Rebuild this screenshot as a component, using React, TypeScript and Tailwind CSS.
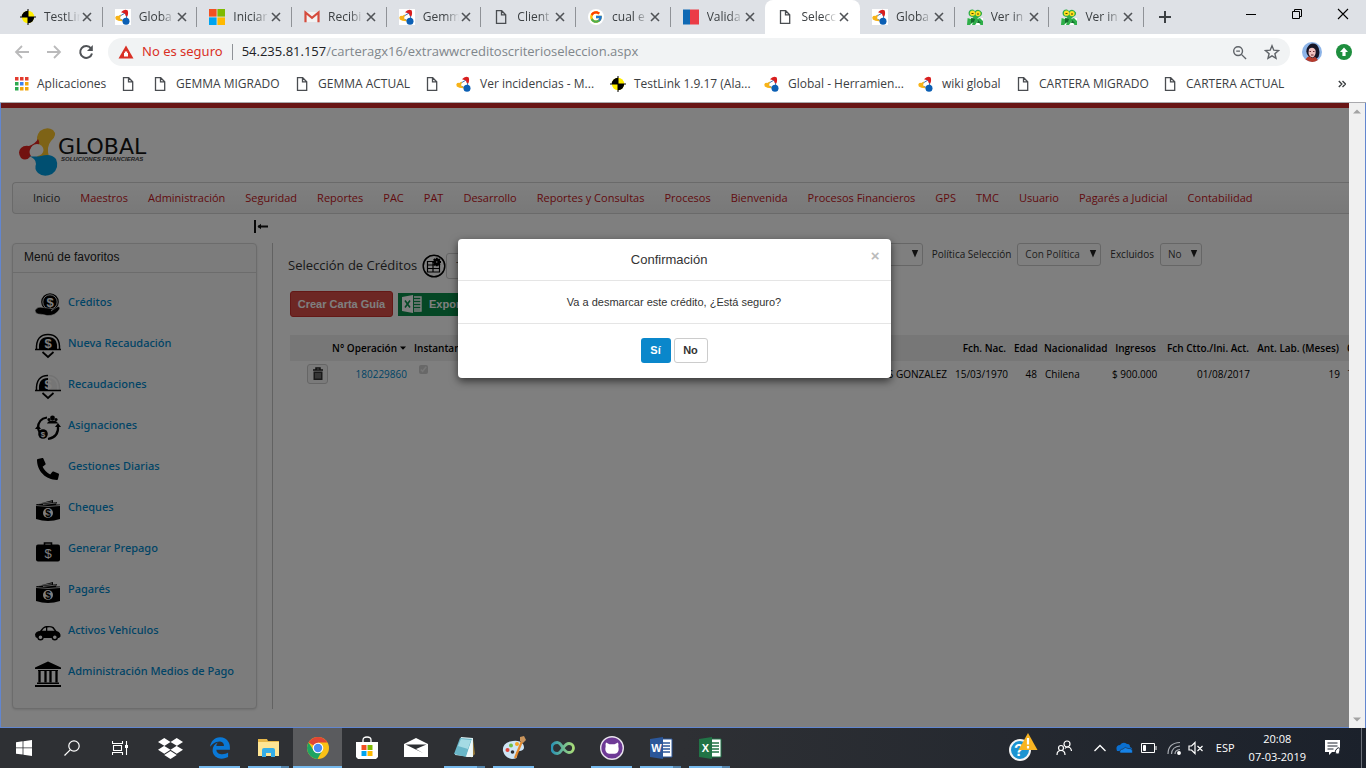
import React from "react";
import { FaDropbox, FaEdgeLegacy, FaPhoneAlt } from "react-icons/fa";
import { FcGoogle } from "react-icons/fc";

const TestLinkIcon = () => (
  <svg viewBox="0 0 16 16" className="size-4 shrink-0">
    <circle cx="8" cy="8" r="6.2" fill="#ffee00" />
    <path d="M8 8V1.8A6.2 6.2 0 0 0 1.8 8zM8 8v6.2A6.2 6.2 0 0 0 14.200 8z" fill="#000" />
    <path d="M8 0v16M0 8h16" stroke="#000" strokeWidth="1" />
  </svg>
);

const GlobalIcon = () => (
  <svg viewBox="0 0 16 16" className="size-4 shrink-0 bg-white">
    <path d="M2.500 8.500L11 3.500M11 3.500L12 12M2.500 9l8 3.500" stroke="#3b74b8" strokeWidth="1" />
    <path d="M6 3.200Q9 -.5 12.500 1.200Q13.800 4 12.300 7.500L10.500 6.500L10 4.500z" fill="#d81e1e" />
    <path d="M.3 8.500Q1 6 3.200 7L6 5.500L5 9.500L8.500 12.200Q3 12.500 .8 10.500z" fill="#f7b318" />
    <circle cx="11" cy="12.300" r="3.500" fill="#0b5fb4" />
  </svg>
);

const MicrosoftIcon = () => (
  <svg viewBox="0 0 16 16" className="size-4 shrink-0">
    <path fill="#f25022" d="M0 0h7.600v7.600H0z" />
    <path fill="#7fba00" d="M8.400 0H16v7.600H8.400z" />
    <path fill="#00a4ef" d="M0 8.400h7.600V16H0z" />
    <path fill="#ffb900" d="M8.400 8.400H16V16H8.400z" />
  </svg>
);

const GmailIcon = () => (
  <svg viewBox="0 0 16 16" className="size-4 shrink-0">
    <path fill="#f2f2f2" d="M2 3h12v10H2z" />
    <path d="M1.500 13.200V3.500L8 8.800l6.500-5.300v9.700" fill="none" stroke="#d54b3d" strokeWidth="2.200" />
  </svg>
);

const PageIcon = () => (
  <svg viewBox="0 0 16 16" className="size-4 shrink-0" fill="none" stroke="#4a4d51" strokeWidth="1.300">
    <path d="M3.500 1.700h5.200l4 4v8.600H3.500zM8.500 1.700v4.200h4.200" />
  </svg>
);

const GoogleTabIcon = () => (
  <span className="flex size-4 shrink-0 items-center justify-center rounded-full bg-white">
    <FcGoogle className="size-[14px]" />
  </span>
);

const ChileIcon = () => (
  <svg viewBox="0 0 16 16" className="size-4 shrink-0">
    <path fill="#0f69b4" d="M0 .5h7v15H0z" />
    <path fill="#eb3c46" d="M7 .5h9v15H7z" />
  </svg>
);

const MantisIcon = () => (
  <svg viewBox="0 0 16 16" className="size-4 shrink-0">
    <path fill="#fff" d="M0 9h16v7H0z" />
    <path fill="#2fae4a" d="M1.500 4Q2 0 6 .5L8 2Q12-1 15 3.500Q15.500 7 12 8L10 10l3-1 3 3v4h-2.500l-2.500-4-3 4H5l1-3-3 3H0l.5-7 4 1 2-2Q1.500 8 1.500 4z" />
    <path fill="#136d2c" d="M4 9l4 1-1 3-3 1zM11 11l3 3h-4z" />
    <circle cx="5.500" cy="4.200" r="2.600" fill="#ffdf20" />
    <circle cx="11" cy="4.600" r="2.600" fill="#ffdf20" />
    <path d="M4.500 4.500h2M10 5h2" stroke="#4d4100" strokeWidth="1.200" />
  </svg>
);

const CloseIcon = () => (
  <svg viewBox="0 0 10 10" className="size-[10px]" stroke="#505357" strokeWidth="1.600">
    <path d="M1 1l8 8M9 1L1 9" />
  </svg>
);

type Tab = { icon: React.ReactNode; label: string; active?: boolean; noRule?: boolean };

const tabs: Tab[] = [
  { icon: <TestLinkIcon />, label: "TestLin" },
  { icon: <GlobalIcon />, label: "Globa" },
  { icon: <MicrosoftIcon />, label: "Iniciar" },
  { icon: <GmailIcon />, label: "Recibi" },
  { icon: <GlobalIcon />, label: "Gemm" },
  { icon: <PageIcon />, label: "Client" },
  { icon: <GoogleTabIcon />, label: "cual e" },
  { icon: <ChileIcon />, label: "Valida", noRule: true },
  { icon: <PageIcon />, label: "Selecc", active: true, noRule: true },
  { icon: <GlobalIcon />, label: "Globa" },
  { icon: <MantisIcon />, label: "Ver in" },
  { icon: <MantisIcon />, label: "Ver in" },
];

function TabStrip() {
  return (
    <div className="flex h-[34px] shrink-0 bg-[#dee1e6] pl-2">
      <div className="flex w-[1136px] min-w-0">
        {tabs.map((tab, i) => (
          <div
            key={i}
            className={
              tab.active
                ? "relative flex min-w-0 flex-1 items-center rounded-t-lg bg-white pl-3"
                : "relative flex min-w-0 flex-1 items-center pl-3"
            }
          >
            {tab.icon}
            <span className="ml-2 w-9 overflow-hidden text-[12px] whitespace-nowrap text-[#3c4043] [mask-image:linear-gradient(to_right,black_60%,transparent)]">
              {tab.label}
            </span>
            <button type="button" aria-label="Cerrar pestaña" className="ml-[2px]">
              <CloseIcon />
            </button>
            {!tab.noRule && <span className="absolute top-[7px] right-0 h-5 w-px bg-[#8f9297]" />}
          </div>
        ))}
      </div>
      <button type="button" aria-label="Nueva pestaña" className="ml-[14px] self-center">
        <svg viewBox="0 0 14 14" className="size-[14px]" stroke="#3c4043" strokeWidth="2">
          <path d="M7 1v12M1 7h12" />
        </svg>
      </button>
      <div className="ml-auto flex items-start pt-2 pr-[17px]">
        <button type="button" aria-label="Minimizar" className="mr-[34px]">
          <svg viewBox="0 0 12 12" className="size-3" stroke="#000">
            <path d="M1 6.500h10" />
          </svg>
        </button>
        <button type="button" aria-label="Restaurar" className="mr-[34px]">
          <svg viewBox="0 0 12 12" className="size-3" stroke="#000" fill="none">
            <path d="M1.500 3.500h7v7h-7zM3.500 3V1.500h7v7H9" />
          </svg>
        </button>
        <button type="button" aria-label="Cerrar">
          <svg viewBox="0 0 12 12" className="size-3" stroke="#000" strokeWidth="1.100">
            <path d="M1 1l10 10M11 1L1 11" />
          </svg>
        </button>
      </div>
    </div>
  );
}

function AddressBar() {
  return (
    <div className="flex h-9 shrink-0 items-center bg-white pr-[14px] pl-[14px]">
      <button type="button" aria-label="Atrás">
        <svg viewBox="0 0 16 16" className="size-4" fill="none" stroke="#bababb" strokeWidth="1.800">
          <path d="M15 8H2.500M8 2L2 8l6 6" />
        </svg>
      </button>
      <button type="button" aria-label="Adelante" className="ml-4">
        <svg viewBox="0 0 16 16" className="size-4" fill="none" stroke="#bababb" strokeWidth="1.800">
          <path d="M1 8h12.500M8 2l6 6-6 6" />
        </svg>
      </button>
      <button type="button" aria-label="Recargar" className="ml-4">
        <svg viewBox="0 0 16 16" className="size-4">
          <path d="M13 4.300A6 6 0 1 0 14 9.500" fill="none" stroke="#505357" strokeWidth="2" />
          <path d="M14.800 1v6H9z" fill="#505357" />
        </svg>
      </button>
      <div className="ml-[14px] flex h-7 flex-1 items-center rounded-full bg-[#f1f3f4] pr-[10px] pl-[10px]">
        <svg viewBox="0 0 16 14" className="h-[14px] w-4">
          <path d="M8 .5L15.500 13.500H.5z" fill="#d93025" />
          <path d="M6 8h4v3.500H6zM6.800 8V6.500h2.400V8" fill="#fff" />
        </svg>
        <span className="ml-2 font-[Noto_Sans] text-[13px] text-[#d93025]">No es seguro</span>
        <span className="mr-[9px] ml-[9px] h-4 w-px bg-[#8f9297]" />
        <div role="textbox" aria-label="Dirección" className="text-[13px] text-[#80868b]">
          <span className="text-[#202124]">54.235.81.157</span>/carteragx16/extrawwcreditoscriterioseleccion.aspx
        </div>
        <button type="button" aria-label="Zoom" className="ml-auto">
          <svg viewBox="0 0 16 16" className="size-[15px]" fill="none" stroke="#5f6368" strokeWidth="1.500">
            <circle cx="6.500" cy="6.500" r="4.700" />
            <path d="M10 10l5 5M4.500 6.500h4" />
          </svg>
        </button>
        <button type="button" aria-label="Marcador" className="ml-[17px]">
          <svg viewBox="0 0 16 16" className="size-4" fill="none" stroke="#5f6368" strokeWidth="1.400">
            <path d="M8 1.800l1.800 4.400 4.700.4-3.600 3.100 1.100 4.600L8 11.800l-4 2.500 1.100-4.600L1.500 6.600l4.700-.4z" />
          </svg>
        </button>
      </div>
      <svg viewBox="0 0 20 20" className="ml-3 size-5">
        <circle cx="10" cy="10" r="10" fill="#8db4e8" />
        <path d="M5 6Q9-1 15 3Q19 8 16.500 15L13 18L7 15Q3 11 5 6z" fill="#161526" />
        <path d="M7 7Q11 4 13.500 8Q14.500 13 11 15.500Q7 15 6.500 11z" fill="#f0c0bd" />
        <path d="M3.500 17.500Q6 13.500 8.500 15Q11 17 13 14.800L16 18Q10 22 3.500 17.500z" fill="#b53a2b" />
        <path d="M7.500 9.500h1.500M11 9.500h1.500M9 13h2.500" stroke="#6b2c35" />
      </svg>
      <svg viewBox="0 0 16 16" className="ml-[14px] size-4">
        <circle cx="8" cy="8" r="8" fill="#1e8e3e" />
        <path d="M8 3.500L12 8H9.600v4H6.400V8H4z" fill="#fff" />
      </svg>
    </div>
  );
}

const AppsIcon = () => (
  <svg viewBox="0 0 14 14" className="size-[14px] shrink-0">
    <path fill="#e33b2e" d="M0 0h3.500v3.500H0zM5 0h3.500v3.500H5zM10 0h3.500v3.500H10z" />
    <path fill="#2da94f" d="M0 5h3.500v3.500H0zM0 10h3.500v3.500H0z" />
    <path fill="#3c82f0" d="M5 5h3.500v3.500H5z" />
    <path fill="#f2a60c" d="M10 5h3.500v3.500H10zM5 10h3.500v3.500H5zM10 10h3.500v3.500H10z" />
  </svg>
);

const bookmarks: { icon: React.ReactNode; label: string; width: string }[] = [
  { icon: <AppsIcon />, label: "Aplicaciones", width: "w-[105px]" },
  { icon: <PageIcon />, label: "", width: "w-8" },
  { icon: <PageIcon />, label: "GEMMA MIGRADO", width: "w-[142px]" },
  { icon: <PageIcon />, label: "GEMMA ACTUAL", width: "w-[130px]" },
  { icon: <PageIcon />, label: "", width: "w-8" },
  { icon: <GlobalIcon />, label: "Ver incidencias - M...", width: "w-[154px]" },
  { icon: <TestLinkIcon />, label: "TestLink 1.9.17 (Ala...", width: "w-[154px]" },
  { icon: <GlobalIcon />, label: "Global - Herramien...", width: "w-[154px]" },
  { icon: <GlobalIcon />, label: "wiki global", width: "w-[97px]" },
  { icon: <PageIcon />, label: "CARTERA MIGRADO", width: "w-[147px]" },
  { icon: <PageIcon />, label: "CARTERA ACTUAL", width: "w-[130px]" },
];

function BookmarksBar() {
  return (
    <nav className="flex h-[33px] shrink-0 items-center border-b border-[#a9a9ad] bg-white pb-1 pl-[15px] text-[12px] text-[#3c4043]">
      {bookmarks.map((b, i) => (
        <a key={i} href="#" aria-label={b.label || "Página"} className={`${b.width} flex shrink-0 items-center gap-2 whitespace-nowrap`}>
          {b.icon}
          {b.label}
        </a>
      ))}
      <button type="button" aria-label="Más marcadores" className="mr-5 ml-auto">
        <svg viewBox="0 0 8 8" className="size-2" fill="none" stroke="#3c4043" strokeWidth="1.400">
          <path d="M.8 1l3 3-3 3M4.500 1l3 3-3 3" />
        </svg>
      </button>
    </nav>
  );
}

function GlobalLogo() {
  return (
    <svg viewBox="0 0 136 54" className="h-[54px] w-[136px]">
      <path d="M22 5Q29 0 35 4Q40 9 33 15Q28 21 31 31L18 32Q27 22 20 18Q17 11 22 5z" fill="#fcc62d" />
      <path d="M20 13Q24 20 16 20Q9 24 13 30Q8 36 3 32Q-1 26 3 22Q6 19 11 20Q17 18 20 13z" fill="#e52421" />
      <path d="M10 30Q17 31 23 30Q33 27 38 33Q42 42 34 48Q26 52 20 47Q16 43 18 38Q18 32 10 30z" fill="#009fe3" />
      <ellipse cx="19" cy="24" rx="6.500" ry="6" fill="#fff" />
      <text x="40" y="28" fontFamily="DejaVu Sans" fontSize="22" fill="#151515">
        GLOBAL
      </text>
      <text x="43" y="35" fontFamily="Liberation Sans" fontSize="6" fontWeight="bold" fontStyle="italic" fill="#444">
        SOLUCIONES FINANCIERAS
      </text>
    </svg>
  );
}

const menu = [
  "Inicio", "Maestros", "Administración", "Seguridad", "Reportes", "PAC", "PAT", "Desarrollo",
  "Reportes y Consultas", "Procesos", "Bienvenida", "Procesos Financieros", "GPS", "TMC", "Usuario",
  "Pagarés a Judicial", "Contabilidad",
];

const Dollar = ({ x, y, size, color = "#fff" }: { x: number; y: number; size: number; color?: string }) => (
  <text x={x} y={y} fontSize={size} fontFamily="Liberation Sans" fontWeight="bold" textAnchor="middle" fill={color}>
    $
  </text>
);

const HandCoin = () => (
  <svg viewBox="0 0 26 26" className="size-[26px]">
    <circle cx="15" cy="10" r="8.800" fill="#000" />
    <circle cx="15" cy="10" r="7.200" fill="none" stroke="#fff" strokeWidth=".8" />
    <Dollar x={15} y={14.500} size={13} />
    <path d="M0 18Q3 14 8 15.500L17 16.500Q18 18 16 19L23 14.500Q26 15 24 18Q20 24 12 23.500Q6 22 3 22Q0 21 0 18z" fill="#000" stroke="#fff" strokeWidth=".5" />
  </svg>
);

const CoinDown = ({ half = false }: { half?: boolean }) => (
  <svg viewBox="0 0 26 26" className="size-[26px]">
    <path d="M1.500 16Q1 1.500 13 1.500" fill="none" stroke="#000" strokeWidth="1.500" />
    <path d="M13 1.500Q25 1.500 24.500 16" fill="none" stroke={half ? "#e4e4e4" : "#000"} strokeWidth="1.500" />
    <path d="M4 16Q3 4 13 4V16z" fill="#000" />
    <path d="M13 4Q23 4 22 16H13z" fill={half ? "#ececec" : "#000"} />
    <Dollar x={13} y={14.500} size={13} />
    <path d="M0 16.500h26M7.500 19l5.500 5 5.500-5" fill="none" stroke="#000" strokeWidth="1.700" />
  </svg>
);

const Cycle = () => (
  <svg viewBox="0 0 26 26" className="size-[26px]">
    <path d="M3 13Q3 4 12 2.500M23 11Q24 22 13 24M5 18Q3 15 3 12" fill="none" stroke="#000" strokeWidth="2.200" />
    <path d="M0 14l3-4 3 4zM20 12l3-4 3 4z" fill="#000" />
    <circle cx="8" cy="19" r="4.800" fill="#000" />
    <Dollar x={8} y={22} size={8} />
    <circle cx="17.500" cy="3" r="2.400" fill="#000" />
    <circle cx="14" cy="4.500" r="1.600" fill="#000" />
    <circle cx="21" cy="4.500" r="1.600" fill="#000" />
    <path d="M12 8.500Q13 5.500 17.500 5.500Q22 5.500 23 8.500z" fill="#000" />
  </svg>
);

const Bills = () => (
  <svg viewBox="0 0 26 26" className="size-[26px]">
    <path d="M1 7.500L18 3v2.500l4-.5-1 2.500h4V22Q13 26 1 22z" fill="#000" />
    <path d="M3 6.800l14-2M8 7.500l13-1.500M1 8.500Q13 10.500 25 8.500" fill="none" stroke="#fff" strokeWidth=".7" />
    <circle cx="13" cy="16" r="5" fill="#fff" />
    <Dollar x={13} y={19.500} size={10} color="#000" />
  </svg>
);

const Briefcase = () => (
  <svg viewBox="0 0 26 26" className="size-[26px]">
    <rect x="1" y="6.500" width="24" height="17" rx="2" fill="#000" />
    <path d="M9.500 7V5h7v2" fill="none" stroke="#000" strokeWidth="1.600" />
    <text x="13" y="20" fontSize="13" fontFamily="Liberation Sans" textAnchor="middle" fill="#fff">$</text>
  </svg>
);

const SideCar = () => (
  <svg viewBox="0 0 26 26" className="size-[26px]">
    <path d="M0 14.500Q1 11 5 11Q8 6.500 11 6Q16 5.500 18.500 7L21.500 11Q26 12 25.500 16.500L24 18H2Q0 17.500 0 14.500z" fill="#000" />
    <path d="M7 10.700Q8.500 8 11 7.600V10.700zM12.300 7.500Q16 7 17.500 8.200L19.500 10.700H12.300z" fill="#fff" />
    <circle cx="5.500" cy="17.300" r="2.500" fill="#fff" stroke="#000" strokeWidth="1.400" />
    <circle cx="19.800" cy="17.300" r="2.500" fill="#fff" stroke="#000" strokeWidth="1.400" />
  </svg>
);

const Bank = () => (
  <svg viewBox="0 0 26 26" className="size-[26px]">
    <path d="M0 6.500L13 .5l13 6V8H0zM2 21.500h22V23H2zM0 24h26v2H0z" fill="#000" />
    <path d="M4.500 9v12.500M10.500 9v12.500M15.500 9v12.500M21.500 9v12.500" stroke="#000" strokeWidth="2.300" />
    <path d="M3 9.500h20" stroke="#000" />
  </svg>
);

const Phone = () => (
  <span className="flex size-[26px] items-center justify-center">
    <FaPhoneAlt className="size-[22px] -scale-y-100 -rotate-90 text-black" />
  </span>
);

const favorites: { icon: React.ReactNode; label: string }[] = [
  { icon: <HandCoin />, label: "Créditos" },
  { icon: <CoinDown />, label: "Nueva Recaudación" },
  { icon: <CoinDown half />, label: "Recaudaciones" },
  { icon: <Cycle />, label: "Asignaciones" },
  { icon: <Phone />, label: "Gestiones Diarias" },
  { icon: <Bills />, label: "Cheques" },
  { icon: <Briefcase />, label: "Generar Prepago" },
  { icon: <Bills />, label: "Pagarés" },
  { icon: <SideCar />, label: "Activos Vehículos" },
  { icon: <Bank />, label: "Administración Medios de Pago" },
];

function Sidebar() {
  return (
    <aside className="flex w-[245px] shrink-0 flex-col rounded border border-[#d8d8d8] bg-[#f9f9f9] shadow-sm">
      <h2 className="border-b border-[#d8d8d8] px-[11px] pt-1 pb-[6px] font-[Liberation_Sans] text-[12px] leading-[18px] text-[#222]">
        Menú de favoritos
      </h2>
      <ul className="pt-4 pl-[22px]">
        {favorites.map((f) => (
          <li key={f.label} className="h-[41px]">
            <a href="#" className="flex gap-[7px] font-['Noto_Sans'] text-[11px] leading-[26px] font-medium whitespace-nowrap text-[#0088cc]">
              <span className="pt-[3px]">{f.icon}</span>
              {f.label}
            </a>
          </li>
        ))}
      </ul>
    </aside>
  );
}

const selectClass = "appearance-none rounded-[3px] border border-[#ccc] bg-transparent text-[10px] text-[#444]";

function Filter({ id, label, value, width }: { id: string; label: string; value: string; width: string }) {
  return (
    <>
      <label htmlFor={id} className="mr-[6px] ml-[9px] text-[10px] whitespace-nowrap">
        {label}
      </label>
      <span className={`${width} relative flex`}>
        <select id={id} className={`${selectClass} h-[23px] w-full pl-[7px]`}>
          <option>{value}</option>
        </select>
        <svg viewBox="0 0 8 8" className="absolute top-[7px] right-1 size-2">
          <path d="M.8 0h6.400L4 7.500z" fill="#222" />
        </svg>
      </span>
    </>
  );
}

const GridGearIcon = () => (
  <svg viewBox="0 0 24 24" className="size-6">
    <circle cx="12" cy="12" r="10.800" fill="none" stroke="#000" strokeWidth="1.500" />
    <path d="M5.500 7.500h12v10.500h-12zM5.500 11h12M5.500 14.500h12M11 7.500V18" fill="none" stroke="#000" strokeWidth="1.200" />
    <path d="M14.800 3.800v8.400M10.600 8h8.400M11.800 5l6 6M17.800 5l-6 6" stroke="#000" strokeWidth="2" />
    <circle cx="14.800" cy="8" r="2" fill="#fff" stroke="#000" strokeWidth="2.600" />
  </svg>
);

const ExcelButtonIcon = () => (
  <svg viewBox="0 0 20 18" className="h-[18px] w-5">
    <path d="M0 2L11 0v18L0 16z" fill="#fff" />
    <path d="M12 2h7v14h-7M12 5h7M12 8h7M12 11h7M12 14h7" fill="none" stroke="#fff" strokeWidth="1.400" />
    <path d="M3 5.500l5 7M8 5.500l-5 7" stroke="#0a8f4a" strokeWidth="1.600" />
  </svg>
);

function CreditsTable() {
  return (
    <table className="mt-[18px] w-[1130px] table-fixed border-collapse text-[10px] whitespace-nowrap text-black">
      <colgroup>
        <col className="w-[42px]" />
        <col className="w-[79px]" />
        <col className="w-[69px]" />
        <col />
        <col className="w-[60px]" />
        <col className="w-[30px]" />
        <col className="w-[67px]" />
        <col className="w-[53px]" />
        <col className="w-[93px]" />
        <col className="w-[90px]" />
        <col className="w-[76px]" />
      </colgroup>
      <thead className="bg-[#eeeeee]">
        <tr className="h-[26px] text-right [&>th]:pr-[5px] [&>th]:pl-[3px] [&>th]:font-semibold">
          <th aria-label="Eliminar" />
          <th>
            <span className="flex items-center justify-end gap-[3px]">
              N° Operación
              <svg viewBox="0 0 6 4" className="h-1 w-[6px] shrink-0">
                <path d="M0 .5h6L3 3.800z" fill="#000" />
              </svg>
            </span>
          </th>
          <th className="text-left">Instantanea</th>
          <th className="text-left">Nombre</th>
          <th>Fch. Nac.</th>
          <th className="text-left">Edad</th>
          <th className="text-left">Nacionalidad</th>
          <th>Ingresos</th>
          <th>Fch Ctto./Ini. Act.</th>
          <th>Ant. Lab. (Meses)</th>
          <th className="text-left">Cargo</th>
        </tr>
      </thead>
      <tbody>
        <tr className="h-[26px] text-right [&>td]:px-1">
          <td>
            <button type="button" aria-label="Eliminar crédito" className="ml-auto flex h-5 w-[21px] items-center justify-center rounded-[3px] border border-[#ccc] bg-[#f4f4f4]">
              <svg viewBox="0 0 12 14" className="h-[14px] w-3">
                <path d="M1 3h10M4 2.500V1h4v1.500" fill="none" stroke="#222" strokeWidth="1.500" />
                <path d="M1.500 4.500h9V13h-9z" fill="#333" />
                <path d="M4 6v5.500M6 6v5.500M8 6v5.500" stroke="#fff" strokeWidth=".6" />
              </svg>
            </button>
          </td>
          <td>
            <a href="#" className="text-[#0088cc]">180229860</a>
          </td>
          <td className="text-left align-top">
            <input type="checkbox" aria-label="Instantanea" defaultChecked disabled className="mt-1 ml-1 size-[9px]" />
          </td>
          <td>TORRES GONZALEZ</td>
          <td>15/03/1970</td>
          <td>48</td>
          <td className="text-left">Chilena</td>
          <td>$ 900.000</td>
          <td>01/08/2017</td>
          <td>19</td>
          <td className="text-left">Técnico</td>
        </tr>
      </tbody>
    </table>
  );
}

function CreditsPanel() {
  return (
    <section className="ml-[15px] min-w-0 flex-1 overflow-hidden border-l border-[#c4c4c4] pl-[15px]">
      <div className="flex items-start text-[#333]">
        <div className="flex shrink-0 items-center pt-[10px]">
          <h1 className="text-[13px] font-medium whitespace-nowrap">Selección de Créditos</h1>
          <button type="button" aria-label="Configurar columnas" className="ml-[5px]">
            <GridGearIcon />
          </button>
          <select aria-label="Criterio" className={`${selectClass} h-[26px] w-[120px] pl-[9px]`}>
            <option>Todos</option>
          </select>
        </div>
        <div className="ml-auto flex shrink-0 items-center pr-[147px]">
          <Filter id="estado" label="Estado" value="Todos" width="w-[130px]" />
          <Filter id="politica" label="Política Selección" value="Con Política" width="w-[84px]" />
          <Filter id="excluidos" label="Excluidos" value="No" width="w-[42px]" />
        </div>
      </div>
      <div className="pl-[2px]">
        <div className="mt-3 flex items-center gap-[5px] font-[Liberation_Sans] text-[11px] font-bold text-white">
          <button type="button" className="h-[26px] w-[103px] rounded-[3px] border border-[#c9302c] bg-[#da4f49]">
            Crear Carta Guía
          </button>
          <button type="button" className="flex h-[23px] w-[110px] items-center gap-[7px] bg-[#0a8f4a] pl-1">
            <ExcelButtonIcon />
            Exportar
          </button>
        </div>
        <CreditsTable />
      </div>
    </section>
  );
}

function ConfirmDialog() {
  return (
    <div
      role="dialog"
      aria-modal="true"
      aria-labelledby="confirm-title"
      className="mx-auto mt-[136px] w-[433px] rounded-[4px] bg-white text-center font-[Liberation_Sans] text-[#333] shadow-[0_3px_9px_rgba(0,0,0,0.6)]"
    >
      <div className="flex h-[42px] items-center border-b border-[#e5e5e5] pr-[11px] pl-[10px]">
        <h2 id="confirm-title" className="flex-1 text-[13px]">Confirmación</h2>
        <button type="button" aria-label="Cerrar" className="pb-2 text-[15px] leading-4 font-bold text-[#bbb]">
          ×
        </button>
      </div>
      <p className="h-[43px] border-b border-[#e5e5e5] text-[11px] leading-[42px]">
        Va a desmarcar este crédito, ¿Está seguro?
      </p>
      <div className="flex justify-center gap-[3px] pt-[14px] pb-[15px] text-[11px] font-bold">
        <button type="button" className="h-[25px] w-[30px] rounded-[3px] bg-[#0a87cb] text-white">
          Sí
        </button>
        <button type="button" className="h-[25px] w-[34px] rounded-[3px] border border-[#ccc] bg-white">
          No
        </button>
      </div>
    </div>
  );
}

function WebPage() {
  return (
    <div className="flex min-h-0 flex-1 border-x border-[#6286cf]">
      <div className="relative min-w-0 flex-1 overflow-hidden border-b border-[#6286cf]">
        <div className="flex h-full flex-col border-t-[5px] border-[#d32a2a] bg-white pb-[18px] pl-[11px]">
          <header className="pt-[18px] pl-[6px]">
            <GlobalLogo />
          </header>
          <nav className="mt-[2px] flex h-8 shrink-0 items-center gap-5 rounded-l border border-r-0 border-[#d4d4d4] bg-gradient-to-b from-white to-[#f2f2f2] pl-5 text-[11px] font-medium whitespace-nowrap">
            {menu.map((item, i) => (
              <a key={item} href="#" className={i === 0 ? "text-[#333]" : "text-[#c4161c]"}>
                {item}
              </a>
            ))}
          </nav>
          <button type="button" aria-label="Ocultar menú" className="mt-[6px] ml-[241px] h-[13px] w-[15px]">
            <svg viewBox="0 0 15 13" className="h-[13px] w-[15px]" fill="none" stroke="#111" strokeWidth="2">
              <path d="M2 0v13M5 6.500H15" />
              <path d="M8 3.800v5.400L4.500 6.500z" fill="#111" stroke="none" />
            </svg>
          </button>
          <main className="mt-[10px] flex min-h-0 flex-1">
            <Sidebar />
            <CreditsPanel />
          </main>
        </div>
        <div className="absolute inset-0 bg-black/50 pr-[2px]">
          <ConfirmDialog />
        </div>
      </div>
      <div className="flex w-4 shrink-0 flex-col items-center justify-between bg-[#f0f0f0] py-[6px]">
        <svg viewBox="0 0 8 5" className="h-[5px] w-2"><path d="M0 4.500L4 .5l4 4z" fill="#a3a3a3" /></svg>
        <svg viewBox="0 0 8 5" className="h-[5px] w-2"><path d="M0 .5h8l-4 4z" fill="#a3a3a3" /></svg>
      </div>
    </div>
  );
}

const WindowsIcon = () => (
  <svg viewBox="0 0 16 16" className="size-4" fill="#fff">
    <path d="M0 2.200L6.600 1.300v6.200H0zM7.400 1.200L16 0v7.500H7.400zM0 8.300h6.600v6.300L0 13.700zM7.400 8.300H16V16l-8.600-1.200z" />
  </svg>
);
const SearchIcon = () => (
  <svg viewBox="0 0 16 16" className="size-4" fill="none" stroke="#fff" strokeWidth="1.200">
    <circle cx="10" cy="6" r="5.200" />
    <path d="M6.200 9.800L.5 15.500" />
  </svg>
);
const TaskViewIcon = () => (
  <svg viewBox="0 0 16 16" className="size-4" fill="none" stroke="#fff" strokeWidth="1.100">
    <path d="M.5 1v2.500h10V1M.5 15v-2.500h10V15M1.500 5.500h8v5h-8zM14.500 1v14" />
    <path d="M13 5h3v3h-3z" fill="#fff" stroke="none" />
  </svg>
);
const ExplorerIcon = () => (
  <svg viewBox="0 0 24 24" className="size-6">
    <path d="M1 3h9l1 2h11v5H1z" fill="#e8b84a" />
    <path d="M1 6h21v14H1z" fill="#ffe594" />
    <path d="M5 21v-7q0-2 2-2h9q2 0 2 2v7h-4v-4H9v4z" fill="#35aee8" />
  </svg>
);
const ChromeIcon = () => (
  <svg viewBox="0 0 24 24" className="size-6">
    <circle cx="12" cy="12" r="11" fill="#fbc116" />
    <path d="M12 12L2.500 6.500A11 11 0 0 1 21.500 6.500H12z" fill="#df4535" />
    <path d="M2.500 6.500A11 11 0 0 0 11.500 23L16 15l-8 0z" fill="#1ea362" />
    <circle cx="12" cy="12" r="5.300" fill="#fff" />
    <circle cx="12" cy="12" r="4.200" fill="#4a8af4" />
  </svg>
);
const StoreIcon = () => (
  <svg viewBox="0 0 24 24" className="size-6">
    <path d="M8 6V4q0-3 4-3t4 3v2" fill="none" stroke="#fff" strokeWidth="1.300" />
    <path d="M1 6h22v15l-2 2H3l-2-2z" fill="#fff" />
    <path d="M6.500 9h5v5h-5z" fill="#f25022" /><path d="M12.500 9h5v5h-5z" fill="#7fba00" />
    <path d="M6.500 15h5v5h-5z" fill="#00a4ef" /><path d="M12.500 15h5v5h-5z" fill="#ffb900" />
  </svg>
);
const MailIcon = () => (
  <svg viewBox="0 0 24 20" className="h-5 w-6">
    <path d="M0 6L12 0l12 6v13H0z" fill="#fff" />
    <path d="M1.500 6.500h21L12 11l7 4z" fill="#2d2f33" />
  </svg>
);
const NotepadIcon = () => (
  <svg viewBox="0 0 24 24" className="size-6">
    <path d="M20 3l2 15-4 4z" fill="#9a7b3c" />
    <path d="M8 1l12 1v19l-18-2z" fill="#dceff2" />
    <path d="M7 2l12 1-6 18L1 18z" fill="#69b6c8" />
    <path d="M8 3l10 1-3 9-10-3z" fill="#a5dbe4" />
    <path d="M13 21l6-18 1 18z" fill="#eef7f8" />
  </svg>
);
const PaintIcon = () => (
  <svg viewBox="0 0 24 24" className="size-6">
    <path d="M1 15Q0 8 8 5.500Q17 3 21 8Q24 14 18 15Q13 15 15 19Q16 23 10 23Q3 22 1 15z" fill="#cfe5f5" />
    <circle cx="5.500" cy="14" r="2" fill="#e0453a" /><circle cx="9" cy="9.500" r="2" fill="#71bf44" />
    <circle cx="15" cy="8" r="2" fill="#f5a623" /><circle cx="10.500" cy="16" r="1.800" fill="#2d2f33" />
    <path d="M20.500 4L13 22" stroke="#e58b2f" strokeWidth="2.200" />
    <path d="M18 1l4-1 2 4-3 3-3-2z" fill="#c9945c" />
  </svg>
);
const InfinityIcon = () => (
  <svg viewBox="0 0 24 14" className="h-[14px] w-6" fill="none" strokeWidth="2.800">
    <defs>
      <linearGradient id="inf" x1="0" x2="1"><stop stopColor="#2a93b4" /><stop offset="1" stopColor="#a8dc79" /></linearGradient>
    </defs>
    <path d="M12 7Q9 1.500 6.200 1.500A5.500 5.500 0 0 0 6.200 12.500Q9 12.500 12 7Q15 2.500 18 2.500A4.500 4.500 0 0 1 18 11.500Q15 11.500 12 7z" stroke="url(#inf)" />
  </svg>
);
const GithubDesktopIcon = () => (
  <svg viewBox="0 0 24 24" className="size-6">
    <circle cx="12" cy="12" r="11.300" fill="#6e3a96" stroke="#e8e3ec" strokeWidth="1.400" />
    <path d="M6 6.500l3.500 1.700h5L18 6.500q.8 2 .3 3.500Q20 17 15 17.800H9Q4 17 5.700 10 5.200 8.500 6 6.500z" fill="#fff" />
  </svg>
);
const OfficeIcon = ({ letter, color }: { letter: string; color: string }) => (
  <svg viewBox="0 0 24 24" className="size-6">
    <path d="M12 3h11v18H12z" fill="#fff" stroke={color} />
    <path d="M14 7h7M14 10h7M14 13h7M14 16h7" stroke={color} strokeWidth="1.300" />
    <path d="M1 3L14 1v22L1 21z" fill={color} />
    <text x="7.500" y="16" fontSize="11" fontWeight="bold" fontFamily="Liberation Sans" textAnchor="middle" fill="#fff">{letter}</text>
  </svg>
);

type Task = { label: string; icon: React.ReactNode; state?: "open" | "multi" | "current" };
const tasks: Task[] = [
  { label: "Dropbox", icon: <FaDropbox className="size-[25px] text-white" /> },
  { label: "Edge", icon: <FaEdgeLegacy className="size-[22px] text-[#0a78d6]" />, state: "open" },
  { label: "Explorador de archivos", icon: <ExplorerIcon />, state: "multi" },
  { label: "Chrome", icon: <ChromeIcon />, state: "current" },
  { label: "Microsoft Store", icon: <StoreIcon /> },
  { label: "Correo", icon: <MailIcon /> },
  { label: "Bloc de notas", icon: <NotepadIcon />, state: "multi" },
  { label: "Paint", icon: <PaintIcon />, state: "open" },
  { label: "Infinity", icon: <InfinityIcon /> },
  { label: "GitHub Desktop", icon: <GithubDesktopIcon />, state: "open" },
  { label: "Word", icon: <OfficeIcon letter="W" color="#2b579a" />, state: "multi" },
  { label: "Excel", icon: <OfficeIcon letter="X" color="#217346" />, state: "multi" },
];

function Taskbar() {
  return (
    <footer className="flex h-10 shrink-0 bg-gradient-to-r from-[#2e3034] via-[#2e3034] to-[#1b212b] text-[12px] text-white">
      <button type="button" aria-label="Inicio" className="flex w-12 items-center justify-center"><WindowsIcon /></button>
      <button type="button" aria-label="Buscar" className="flex w-12 items-center justify-center"><SearchIcon /></button>
      <button type="button" aria-label="Vista de tareas" className="mr-[2px] flex w-12 items-center justify-center"><TaskViewIcon /></button>
      {tasks.map((t) => (
        <button
          key={t.label}
          type="button"
          aria-label={t.label}
          className={
            t.state === "current"
              ? "relative flex w-[49px] items-center justify-center bg-[#5a5b5e]"
              : "relative flex w-[49px] items-center justify-center"
          }
        >
          {t.icon}
          {t.state === "current" && <span className="absolute inset-x-0 bottom-0 h-[2px] bg-[#76b9ed]" />}
          {t.state === "open" && <span className="absolute inset-x-1 bottom-0 h-[2px] bg-[#76b9ed]" />}
          {t.state === "multi" && <span className="absolute inset-x-1 bottom-0 h-[2px] border-r-8 border-[#5484ab] bg-[#76b9ed]" />}
        </button>
      ))}
      <div className="ml-auto flex items-center">
        <svg viewBox="0 0 30 30" className="size-[30px]">
          <circle cx="12" cy="17" r="10" fill="#1b93d1" stroke="#f4f4f4" strokeWidth="2" />
          <text x="11" y="23" fontSize="16" fontWeight="bold" fontFamily="Liberation Sans" textAnchor="middle" fill="#fff">?</text>
          <path d="M20 0l9.500 17H10.500z" fill="#f8b422" />
          <path d="M20 5v6.500M20 13v2.500" stroke="#fff" strokeWidth="2.200" />
        </svg>
        <svg viewBox="0 0 16 16" className="ml-[18px] size-4" fill="none" stroke="#fff" strokeWidth="1.200">
          <circle cx="11" cy="4" r="3" /><circle cx="5" cy="8" r="2.500" />
          <path d="M1 15q0-4.500 4-4.500T9 15M9 8.500q1-1.500 2.500-1.500 3.500 0 4 4" />
        </svg>
        <svg viewBox="0 0 12 8" className="ml-[22px] h-2 w-3" fill="none" stroke="#fff" strokeWidth="1.300"><path d="M.5 7L6 1.500 11.500 7" /></svg>
        <svg viewBox="0 0 18 12" className="ml-[9px] h-3 w-[18px]">
          <path d="M2 9Q0 3.500 5 3Q8-1 12 2Q15 1.500 15 5Q18 6 17 9.500z" fill="#0a6fd0" />
          <path d="M5 11Q4 7.500 8 7Q10 4 13 6.500Q18 6 17.500 11z" fill="#1683e8" stroke="#1e2530" strokeWidth=".6" />
        </svg>
        <svg viewBox="0 0 16 10" className="ml-2 h-[10px] w-4" fill="none" stroke="#fff"><path d="M.5.5h13v9H.5zM15 3v4" /><path d="M2.500 2.500h2v5h-2z" fill="#fff" /></svg>
        <svg viewBox="0 0 14 14" className="ml-[10px] size-[14px]" fill="none" stroke="#aaaeb4" strokeWidth="1.200">
          <path d="M1 13Q1 2 13 1.500M4.500 13Q5 5.500 13 5M8 13Q8 9 13 8.500" /><circle cx="12" cy="12" r="1.300" fill="#fff" stroke="#fff" />
        </svg>
        <svg viewBox="0 0 16 14" className="ml-[7px] h-[14px] w-4" fill="none" stroke="#fff" strokeWidth="1.200"><path d="M1 5h2.500L7 1.500v11L3.500 9H1zM9.500 5l5 5M14.500 5l-5 5" /></svg>
        <span className="ml-3 text-[11px]">ESP</span>
        <div className="ml-[14px] text-center text-[11px] leading-[18px]">
          <div>20:08</div>
          <div>07-03-2019</div>
        </div>
        <svg viewBox="0 0 18 18" className="ml-[18px] size-[18px]">
          <path d="M1 1h15v12H8l-3 3v-3H1z" fill="#fff" />
          <path d="M3.500 4h10M3.500 7h10M3.500 10h6" stroke="#1e2530" />
          <path d="M12 15q-2-3 1-5.500 3-2 3 1.500l-1 4z" fill="#fff" stroke="#1e2530" />
        </svg>
        <span className="mr-1 ml-[19px] h-10 w-px bg-[#6b7079]" />
      </div>
    </footer>
  );
}

export default function App() {
  return (
    <div className="flex h-screen flex-col overflow-hidden bg-white font-['Open_Sans',sans-serif]">
      <TabStrip />
      <AddressBar />
      <BookmarksBar />
      <WebPage />
      <Taskbar />
    </div>
  );
}
